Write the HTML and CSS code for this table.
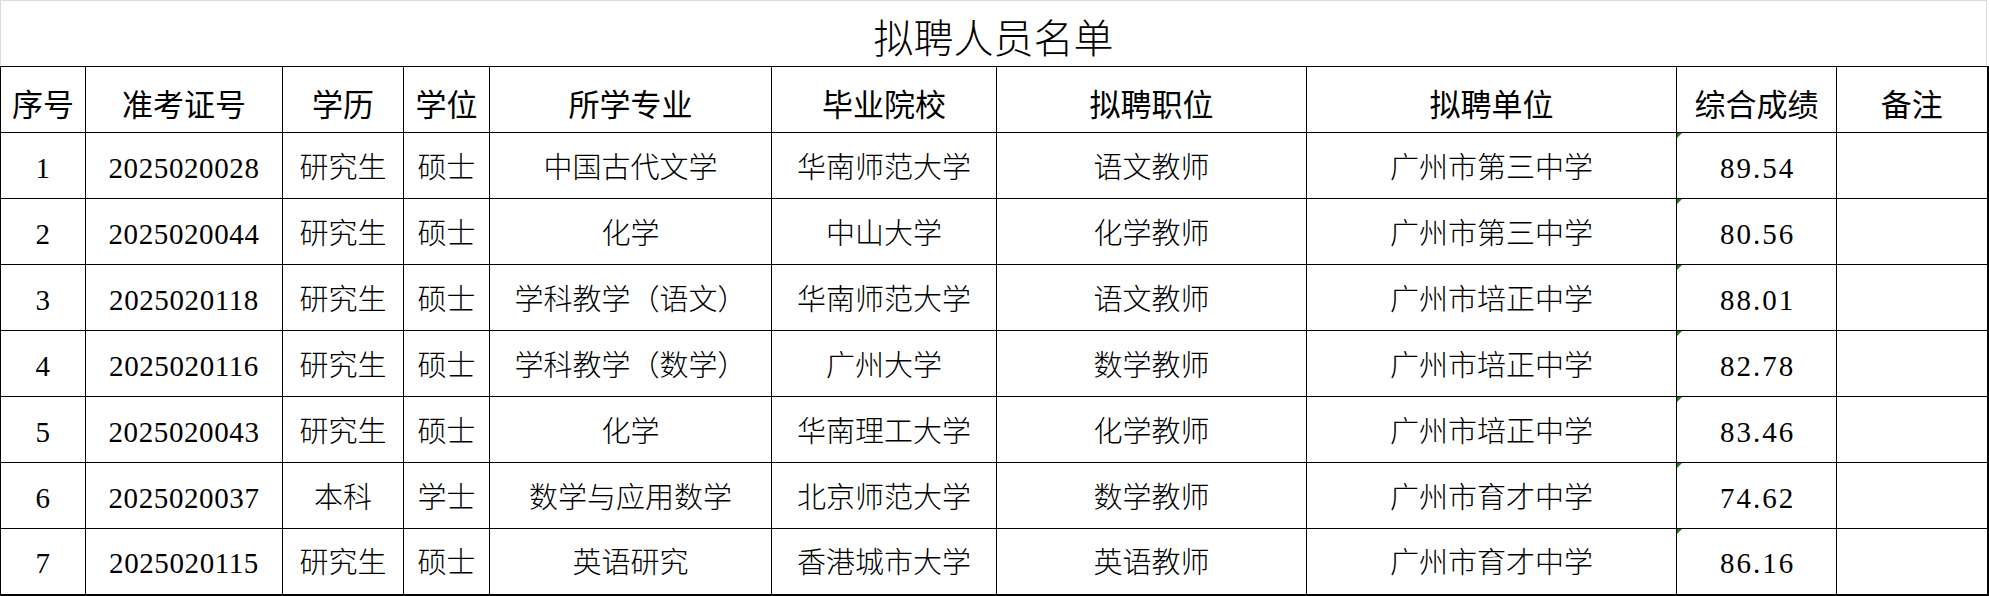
FILE: index.html
```html
<!DOCTYPE html>
<html lang="zh-CN">
<head>
<meta charset="utf-8">
<title>拟聘人员名单</title>
<link rel="stylesheet" href="styles.css">
</head>
<body>
<div class="sheet">
  <div class="title">拟聘人员名单</div>
  <table class="roster">
    <colgroup>
      <col class="c-no"><col class="c-id"><col class="c-edu"><col class="c-deg"><col class="c-major">
      <col class="c-school"><col class="c-post"><col class="c-unit"><col class="c-score"><col class="c-note">
    </colgroup>
    <thead>
      <tr><th>序号</th><th>准考证号</th><th>学历</th><th>学位</th><th>所学专业</th><th>毕业院校</th><th>拟聘职位</th><th>拟聘单位</th><th>综合成绩</th><th>备注</th></tr>
    </thead>
    <tbody>
      <tr><td class="num">1</td><td class="num">2025020028</td><td>研究生</td><td>硕士</td><td>中国古代文学</td><td>华南师范大学</td><td>语文教师</td><td>广州市第三中学</td><td class="num score">89.54</td><td></td></tr>
      <tr><td class="num">2</td><td class="num">2025020044</td><td>研究生</td><td>硕士</td><td>化学</td><td>中山大学</td><td>化学教师</td><td>广州市第三中学</td><td class="num score">80.56</td><td></td></tr>
      <tr><td class="num">3</td><td class="num">2025020118</td><td>研究生</td><td>硕士</td><td>学科教学（语文）</td><td>华南师范大学</td><td>语文教师</td><td>广州市培正中学</td><td class="num score">88.01</td><td></td></tr>
      <tr><td class="num">4</td><td class="num">2025020116</td><td>研究生</td><td>硕士</td><td>学科教学（数学）</td><td>广州大学</td><td>数学教师</td><td>广州市培正中学</td><td class="num score">82.78</td><td></td></tr>
      <tr><td class="num">5</td><td class="num">2025020043</td><td>研究生</td><td>硕士</td><td>化学</td><td>华南理工大学</td><td>化学教师</td><td>广州市培正中学</td><td class="num score">83.46</td><td></td></tr>
      <tr><td class="num">6</td><td class="num">2025020037</td><td>本科</td><td>学士</td><td>数学与应用数学</td><td>北京师范大学</td><td>数学教师</td><td>广州市育才中学</td><td class="num score">74.62</td><td></td></tr>
      <tr><td class="num">7</td><td class="num">2025020115</td><td>研究生</td><td>硕士</td><td>英语研究</td><td>香港城市大学</td><td>英语教师</td><td>广州市育才中学</td><td class="num score">86.16</td><td></td></tr>
    </tbody>
  </table>
</div>
</body>
</html>
```
FILE: styles.css
```css
html, body {
  margin: 0;
  padding: 0;
  background: #ffffff;
}

.sheet {
  width: 1987px;
}

.title {
  box-sizing: border-box;
  height: 66px;
  border: 1px solid #dcdcdc;
  border-bottom: none;
  display: flex;
  align-items: center;
  justify-content: center;
  padding-top: 4px;
  font-family: "Noto Sans CJK SC", sans-serif;
  font-weight: 300;
  font-size: 40px;
  color: #000;
  line-height: 1;
}

.roster {
  width: 1987px;
  table-layout: fixed;
  border-collapse: collapse;
  border-right: 2px solid #000;
  border-bottom: 2px solid #000;
  color: #000;
}

.c-no { width: 85px; }
.c-id { width: 197px; }
.c-edu { width: 121px; }
.c-deg { width: 86px; }
.c-major { width: 282px; }
.c-school { width: 225px; }
.c-post { width: 310px; }
.c-unit { width: 370px; }
.c-score { width: 160px; }
.c-note { width: 151px; }

.roster th,
.roster td {
  border: 1px solid #000;
  height: 66px;
  padding: 5px 0 0 0;
  box-sizing: border-box;
  text-align: center;
  vertical-align: middle;
  white-space: nowrap;
  line-height: 1;
}

.roster th {
  font-family: "Noto Sans CJK SC", sans-serif;
  font-weight: 400;
  font-size: 31px;
}

.roster td {
  font-family: "Liberation Serif", "Noto Sans CJK SC", serif;
  font-weight: 300;
  font-size: 29px;
}

.roster td.num {
  letter-spacing: 0.6px;
}

.roster td.score {
  position: relative;
  letter-spacing: 2px;
  padding-left: 2px;
}

.roster td.score::before {
  content: "";
  position: absolute;
  left: 0;
  top: 0;
  width: 0;
  height: 0;
  border-top: 5px solid #1a7f1a;
  border-right: 5px solid transparent;
}
```
